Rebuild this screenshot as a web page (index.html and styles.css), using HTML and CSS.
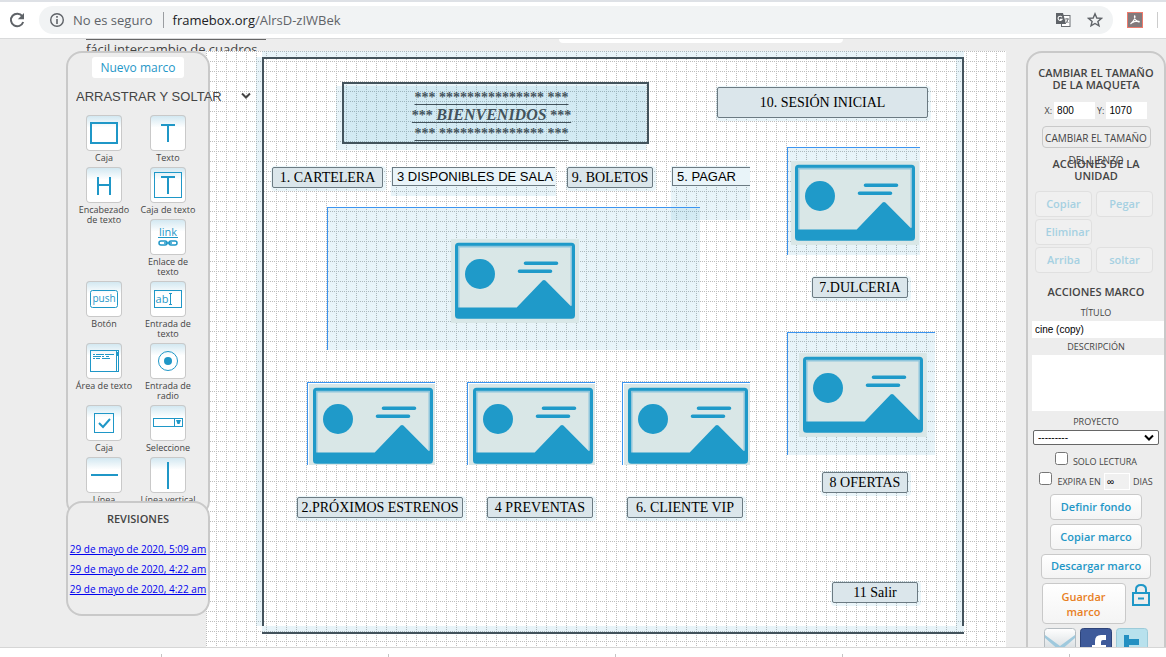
FILE: index.html
```html
<!DOCTYPE html>
<html lang="es">
<head>
<meta charset="utf-8">
<title>framebox.org</title>
<link rel="stylesheet" href="styles.css">
</head>
<body>
<svg class="defs" aria-hidden="true">
  <symbol id="picture" viewBox="0 0 128 84">
    <rect width="128" height="84" fill="#d9e7e7"/>
    <rect x="6.5" y="6.5" width="115" height="70" rx="1" fill="none" stroke="#8fc6dc" stroke-width="4"/>
    <rect x="5.5" y="5.2" width="117" height="73" rx="2" fill="none" stroke="#1f9ac9" stroke-width="3"/>
    <circle cx="29" cy="35" r="15" fill="#1f9ac9"/>
    <path d="M74.5 24.3H105.5M68.5 32.3H99.5" stroke="#1f9ac9" stroke-width="3.6" stroke-linecap="round"/>
    <path d="M5 68.5H65.7L91.6 41.6Q93 40.4 94.4 41.6L119.7 67L123 66V78H5Z" fill="#1f9ac9"/>
  </symbol>
</svg>

<header class="browser">
  <div class="tabstrip"></div>
  <div class="toolbar">
    <button class="reload" aria-label="Recargar">
      <svg width="18" height="18" viewBox="0 0 18 18"><path d="M14.3 5.2A6.3 6.3 0 1 0 15.2 11" fill="none" stroke="#5f6368" stroke-width="2"/><path d="M16 2V8.2H9.8Z" fill="#5f6368"/></svg>
    </button>
    <div class="address">
      <svg width="16" height="16" viewBox="0 0 16 16"><circle cx="8" cy="8" r="6.3" fill="none" stroke="#5f6368" stroke-width="1.4"/><path d="M8 7V12M8 4V5.8" stroke="#5f6368" stroke-width="1.6"/></svg>
      <span class="security">No es seguro</span>
      <span class="url"><b>framebox.org</b>/AlrsD-zIWBek</span>
      <svg class="translate" width="16" height="16" viewBox="0 0 16 16"><rect x="6.5" y="3.5" width="8.5" height="11" fill="#fff" stroke="#6a6e72"/><path d="M1 1H8L11 12H1Z" fill="#5f6368"/><path d="M7 5.2A2.1 2.1 0 1 0 7 7.4H5" fill="none" stroke="#fff" stroke-width="1.1"/><path d="M9.8 7H14M12 6V7M13 7Q12.5 10 10.5 11.5M11 8.5L13.5 11" fill="none" stroke="#6a6e72" stroke-width=".9"/></svg>
      <svg width="16" height="16" viewBox="0 0 16 16"><path d="M8 1.8L9.8 6L14.4 6.4L10.9 9.4L12 13.9L8 11.5L4 13.9L5.1 9.4L1.6 6.4L6.2 6Z" fill="none" stroke="#5f6368" stroke-width="1.4"/></svg>
    </div>
    <svg class="pdf" width="16" height="16" viewBox="0 0 16 16"><rect x=".5" y=".5" width="15" height="15" fill="#837a7c" stroke="#ee7a6c"/><path d="M7.6 3.5C9 5 7 9 3.5 12M7.6 3.5C6.600 5.500 9 10 12.500 10.200M4 11.200C7 9.400 10 8.700 12.700 9.500" fill="none" stroke="#fff" stroke-width="1.1"/></svg>
    <span class="toolbar-rule"></span>
  </div>
</header>

<main class="page">
  <aside class="left">
    <p class="intro">fácil intercambio de cuadros</p>
    <section class="panel tools-panel">
      <button class="new-frame">Nuevo marco</button>
      <div class="mode">
        <select aria-label="Modo"><option>ARRASTRAR Y SOLTAR</option></select>
        <svg width="10" height="8" viewBox="0 0 10 8"><path d="M1 1.500L5 5.500L9 1.500" fill="none" stroke="#444" stroke-width="2"/></svg>
      </div>
      <div class="tools">
        <button class="tool"><svg viewBox="0 0 36 36"><rect x="5" y="8" width="26" height="20"/></svg><span>Caja</span></button>
        <button class="tool"><svg viewBox="0 0 36 36"><path d="M11 10H25M18 10V27"/></svg><span>Texto</span></button>
        <button class="tool tool-tall"><svg viewBox="0 0 36 36"><path d="M12 10V28M24 10V28M12 18H24"/></svg><span>Encabezado de texto</span></button>
        <button class="tool"><svg viewBox="0 0 36 36"><rect class="thin" x="4.500" y="5.500" width="27" height="25"/><path d="M11 10H25M18 10V27"/></svg><span>Caja de texto</span></button>
        <button class="tool tool-right"><svg viewBox="0 0 36 36"><text x="18" y="17" font-size="11">link</text><path class="thin" d="M8 18.500H28"/><rect class="mid" x="9" y="22" width="8" height="4" rx="2"/><rect class="mid" x="19" y="22" width="8" height="4" rx="2"/><path class="mid" d="M14 24H22"/></svg><span>Enlace de texto</span></button>
        <button class="tool"><svg viewBox="0 0 36 36"><rect class="thin" x="4.500" y="9.500" width="27" height="17" rx="2"/><text x="18" y="21" font-size="10">push</text></svg><span>Botón</span></button>
        <button class="tool"><svg viewBox="0 0 36 36"><rect class="thin" x="4.500" y="9.500" width="27" height="17"/><text x="12" y="22" font-size="11">ab</text><path class="thin" d="M19 12.500H22M19 23.500H22M20.500 12.500V23.500"/></svg><span>Entrada de texto</span></button>
        <button class="tool"><svg viewBox="0 0 36 36"><rect class="thin" x="4.500" y="7.500" width="28" height="21"/><path class="thin" d="M30.500 7V29M7 11.500H9M10 11.500H18M19 11.500H28M7 13.500H15M16 13.500H18M20 13.500H23M7 15.500H9M10 15.500H14M16 15.500H24"/><path d="M31 9V13"/></svg><span>Área de texto</span></button>
        <button class="tool"><svg viewBox="0 0 36 36"><circle class="thin" cx="18" cy="18" r="9.500"/><circle class="solid" cx="18" cy="18" r="4"/></svg><span>Entrada de radio</span></button>
        <button class="tool"><svg viewBox="0 0 36 36"><rect class="thin" x="8.500" y="8.500" width="19" height="19"/><path d="M13 18L17 22L24 14"/></svg><span>Caja</span></button>
        <button class="tool"><svg viewBox="0 0 36 36"><rect class="thin" x="3.500" y="13.500" width="29" height="8"/><path class="thin" d="M24.500 13V22"/><path class="solid" d="M26 15H31L29.500 19H27.500Z"/></svg><span>Seleccione</span></button>
        <button class="tool"><svg viewBox="0 0 36 36"><path d="M5 18H32"/></svg><span>Línea</span></button>
        <button class="tool"><svg viewBox="0 0 36 36"><path d="M18 5V32"/></svg><span>Línea vertical</span></button>
      </div>
    </section>
    <section class="panel revisions">
      <h2>REVISIONES</h2>
      <a href="#r3">29 de mayo de 2020, 5:09 am</a>
      <a href="#r2">29 de mayo de 2020, 4:22 am</a>
      <a href="#r1">29 de mayo de 2020, 4:22 am</a>
    </section>
  </aside>

  <div class="middle">
    <div class="banner"></div>
    <div class="canvas">
      <div class="edge edge-top"></div>
      <div class="edge edge-bottom"></div>
      <div class="edge edge-left"></div>
      <div class="edge edge-right"></div>

      <div class="tint welcome-tint"></div>
      <div class="welcome">
        <span>*** *************** ***</span>
        <span>*** <em>BIENVENIDOS</em> ***</span>
        <span>*** *************** ***</span>
      </div>

      <button class="node login">10. SESIÓN INICIAL</button>
      <button class="node billboard">1. CARTELERA</button>
      <div class="tint rooms-tint"></div>
      <input class="field rooms" aria-label="Salas" value="3 DISPONIBLES DE SALA">
      <button class="node tickets">9. BOLETOS</button>
      <div class="tint pay-tint"></div>
      <input class="field pay" aria-label="Pagar" value="5. PAGAR">

      <div class="picture pic-main"><svg><use href="#picture"/></svg></div>
      <div class="picture pic-candy"><svg><use href="#picture"/></svg></div>
      <div class="picture pic-offers"><svg><use href="#picture"/></svg></div>
      <div class="picture small pic-soon"><svg><use href="#picture"/></svg></div>
      <div class="picture small pic-presale"><svg><use href="#picture"/></svg></div>
      <div class="picture small pic-vip"><svg><use href="#picture"/></svg></div>

      <button class="node candy">7.DULCERIA</button>
      <button class="node offers">8 OFERTAS</button>
      <button class="node soon">2.PRÓXIMOS ESTRENOS</button>
      <button class="node presale">4 PREVENTAS</button>
      <button class="node vip">6. CLIENTE VIP</button>
      <button class="node exit">11 Salir</button>
    </div>
  </div>

  <aside class="right">
    <section class="panel actions">
      <h2>CAMBIAR EL TAMAÑO DE LA MAQUETA</h2>
      <div class="size">
        <label for="w">X:</label><input id="w" value="800">
        <label for="h">Y:</label><input id="h" value="1070">
      </div>
      <button class="resize">CAMBIAR EL TAMAÑO DEL LIENZO</button>
      <h2>ACCIONES DE LA UNIDAD</h2>
      <div class="unit">
        <button disabled>Copiar</button><button disabled>Pegar</button>
        <button class="alone" disabled>Eliminar</button>
        <button disabled>Arriba</button><button disabled>soltar</button>
      </div>
      <h2 class="frame-title">ACCIONES MARCO</h2>
      <label class="caption" for="title">TÍTULO</label>
      <input class="wide" id="title" value="cine (copy)">
      <label class="caption" for="desc">DESCRIPCIÓN</label>
      <textarea class="wide" id="desc"></textarea>
      <label class="caption" for="project">PROYECTO</label>
      <div class="project">
        <select id="project"><option>---------</option></select>
        <svg width="10" height="8" viewBox="0 0 10 8"><path d="M1 1.500L5 5.500L9 1.500" fill="none" stroke="#000" stroke-width="2"/></svg>
      </div>
      <label class="check"><input type="checkbox"><span>SOLO LECTURA</span></label>
      <div class="check"><input type="checkbox" id="expires"><label for="expires">EXPIRA EN</label><input class="days" id="days" value="∞"><label for="days">DIAS</label></div>
      <button class="action">Definir fondo</button>
      <button class="action">Copiar marco</button>
      <button class="action action-wide">Descargar marco</button>
      <div class="save-row">
        <button class="save">Guardar marco</button>
        <svg width="20" height="24" viewBox="0 0 20 24"><path d="M2 10H18V22H2ZM5 10V6.500Q5 2 10 2T15 6.500V10M7 15.500H13" fill="none" stroke="#1f97c7" stroke-width="2"/></svg>
      </div>
      <div class="share">
        <svg width="32" height="32" viewBox="0 0 32 32"><defs><linearGradient id="mail" x2="0" y2="1"><stop stop-color="#fff"/><stop offset="1" stop-color="#c5cdd2"/></linearGradient></defs><rect x=".5" y=".5" width="31" height="31" rx="3" fill="url(#mail)" stroke="#b5bcc1"/><path d="M1 7L16 18L31 7V10L16 23L1 10Z" fill="#9fc9dd"/></svg>
        <svg width="32" height="32" viewBox="0 0 32 32"><rect x=".5" y=".5" width="31" height="31" rx="3" fill="#3e5a9a" stroke="#2d4379"/><path d="M26 7V12H23Q21 12 21 14V17H26V21H21V32H15V21H12V17H15V13Q15 7 21 7Z" fill="#fff"/></svg>
        <svg width="32" height="32" viewBox="0 0 32 32"><rect x=".5" y=".5" width="31" height="31" rx="3" fill="#b8e1ed" stroke="#9ccbd9"/><path d="M8 7H13V11H23V17H13V22Q13 25 17 25H23V30H15Q8 30 8 23Z" fill="#2390c2"/></svg>
      </div>
    </section>
  </aside>
</main>

<footer class="shelf"><i></i><i></i><i></i><i></i><i></i></footer>
</body>
</html>
```
FILE: styles.css
```css
* { box-sizing: border-box; }
html, body { height: 100%; margin: 0; }
body {
  display: flex;
  flex-direction: column;
  overflow: hidden;
  background: #ededed;
  color: #444;
  font-family: "Open Sans", sans-serif;
  font-size: 12px;
}
button, input, select, textarea { margin: 0; font: inherit; color: inherit; border-radius: 0; }
button { padding: 0; border: 0; background: none; }
svg { display: block; flex: none; }
.defs { position: absolute; width: 0; height: 0; }

/* browser bar */
.browser { flex: none; background: #fff; border-bottom: 1px solid #d9dadb; }
.tabstrip { height: 2px; background: #dee1e6; }
.toolbar { display: flex; align-items: center; height: 36px; padding: 0 8px; }
.reload { width: 18px; margin-right: 13px; }
.address {
  display: flex;
  flex: 1;
  align-items: center;
  height: 28px;
  padding: 0 10px;
  border-radius: 14px;
  background: #f1f3f4;
  color: #5f6368;
  font-size: 13px;
}
.security { margin: 0 10px 0 8px; }
.url { padding-left: 9px; border-left: 1px solid #9a9da1; line-height: 16px; }
.url b { color: #202124; font-weight: 400; }
.translate { margin: 0 16px 0 auto; }
.pdf { margin-left: 14px; }
.toolbar-rule { width: 1px; height: 16px; margin-left: 14px; background: #ccc; }

/* page */
.page { display: flex; flex: 1; min-height: 0; overflow: hidden; }
.panel { border: 2px solid #c9c9c9; border-radius: 16px; background: #ededed; }
.panel h2 { max-width: 124px; margin: 0; font-size: 11px; font-weight: 600; line-height: 12px; text-align: center; }

.left {
  z-index: 1;
  display: flex;
  flex: none;
  flex-direction: column;
  width: 210px;
  margin-right: -4px;
  padding: 0 0 31px 66px;
}
.intro {
  flex: none;
  width: 180px;
  height: 12px;
  margin: 0 0 0 20px;
  overflow: hidden;
  border-top: 1px solid #666;
  font-size: 13px;
  line-height: 18px;
  white-space: nowrap;
}
.tools-panel { flex: 1; min-height: 0; padding: 4px 4px 0; clip-path: inset(0 -60px 0 0); }
.new-frame {
  display: block;
  width: 92px;
  height: 21px;
  margin: 0 auto;
  border-radius: 3px;
  background: #fff;
  color: #1f97c7;
  font-size: 12px;
}
.mode { display: flex; align-items: center; width: 180px; margin: 8px 0 9px; }
.mode select {
  flex: none;
  width: 180px;
  height: 20px;
  padding: 0 4px;
  border: 0;
  appearance: none;
  background: none;
  font-family: "Liberation Sans", sans-serif;
  font-size: 13px;
}
.mode svg { margin-left: -11px; }
.tools { display: grid; grid-template-columns: 64px 64px; row-gap: 4px; align-items: start; }
.tool { display: flex; flex-direction: column; align-items: center; font-size: 9px; line-height: 10px; }
.tool-tall { margin-bottom: -10px; }
.tool-right { grid-column: 2; }
.tool span { max-width: 60px; }
.tool svg {
  width: 36px;
  height: 36px;
  margin-bottom: 2px;
  border-radius: 4px;
  box-shadow: inset 0 0 0 1px #c9c9c9;
  background: linear-gradient(#cfe6f0, #fff 35%);
  fill: none;
  stroke: #1f97c7;
  stroke-width: 2;
}
.tool .thin { stroke-width: 1; }
.tool .mid { stroke-width: 1.5; }
.tool .solid, .tool text { fill: #1f97c7; stroke: none; }
.tool text { text-anchor: middle; }

.revisions {
  position: relative;
  display: flex;
  flex: none;
  flex-direction: column;
  align-items: center;
  height: 115px;
  margin-top: -16px;
  padding-top: 10px;
}
.panel.revisions h2 { margin-bottom: 14px; }
.revisions a { color: #00e; font-size: 10px; line-height: 20px; white-space: nowrap; }

/* canvas */
.middle { display: flex; flex: 1; flex-direction: column; min-width: 0; }
.banner { flex: none; width: 284px; height: 4px; margin: 0 auto 8px 353px; border-radius: 0 0 4px 4px; background: #fff; }
.canvas {
  position: relative;
  flex: 1;
  overflow: hidden;
  background:
    conic-gradient(at 1px 1px, transparent 75%, #bdbdbd 0) 0 0 / 2px 10px,
    conic-gradient(at 1px 1px, transparent 75%, #bdbdbd 0) 0 0 / 10px 2px,
    #fff;
}
.canvas > * { position: absolute; }
.tint { background: rgba(30, 150, 200, .1); }
.edge { border: 0 solid #43535c; background: rgba(30, 150, 200, .1); }
.edge-top { left: 56px; top: 0; width: 702px; height: 8px; border-bottom-width: 2px; }
.edge-bottom { left: 56px; top: 575px; width: 702px; height: 8px; border-bottom-width: 2px; }
.edge-left { left: 50px; top: 6px; width: 8px; height: 569px; border-right-width: 2px; }
.edge-right { left: 750px; top: 6px; width: 8px; height: 569px; border-right-width: 2px; }

.welcome-tint { left: 130px; top: 35px; width: 310px; height: 64px; }
.welcome {
  display: flex;
  flex-direction: column;
  align-items: center;
  left: 136px;
  top: 31px;
  width: 307px;
  height: 62px;
  padding: 5px 8px 0 0;
  border: 2px solid #43535c;
  background: rgba(30, 150, 200, .1);
  color: #43535c;
  font: bold 14px/18px "Liberation Serif", serif;
}
.welcome span { text-decoration: underline; text-decoration-thickness: 1px; text-underline-offset: 2px; }
.welcome em { font-size: 16px; line-height: 16px; }

.node {
  height: 21px;
  border: 1px solid #6b7a82;
  border-radius: 2px;
  box-shadow: 1px 1px 0 2px rgba(30, 150, 200, .09);
  background: #dbe6eb;
  color: #000;
  font-family: "Liberation Serif", serif;
  font-size: 14px;
  white-space: nowrap;
}
.login { left: 511px; top: 36px; width: 211px; height: 31px; }
.billboard { left: 66px; top: 116px; width: 111px; }
.tickets { left: 361px; top: 116px; width: 86px; }
.candy { left: 606px; top: 226px; width: 96px; }
.offers { left: 616px; top: 421px; width: 86px; }
.soon { left: 91px; top: 446px; width: 166px; }
.presale { left: 281px; top: 446px; width: 106px; }
.vip { left: 421px; top: 446px; width: 116px; }
.exit { left: 626px; top: 531px; width: 86px; }

.field {
  top: 116px;
  height: 19px;
  padding: 0 0 0 4px;
  border: 1px solid #6b7a82;
  border-right: 0;
  background: #e9f4f9;
  color: #000;
  font-family: "Liberation Sans", sans-serif;
  font-size: 13px;
}
.rooms { left: 186px; width: 163px; }
.rooms-tint { left: 185px; top: 116px; width: 165px; height: 29px; }
.pay { left: 466px; width: 78px; }
.pay-tint { left: 465px; top: 115px; width: 79px; height: 54px; }

.picture {
  display: flex;
  align-items: center;
  justify-content: center;
  overflow: hidden;
  border: 0 solid #3a94f0;
  border-width: 1px 0 0 1px;
  background: rgba(30, 150, 200, .1);
}
.picture svg { width: 128px; height: 84px; }
.small { align-items: flex-start; justify-content: flex-start; width: 128px; height: 83px; padding: 1px 0 0 1px; background: #fff; }
.pic-main { left: 121px; top: 156px; width: 373px; height: 143px; padding: 4px 0 0 2px; }
.pic-candy { left: 581px; top: 96px; width: 133px; height: 108px; padding: 3px 0 0 2px; }
.pic-offers { left: 581px; top: 281px; width: 148px; height: 123px; padding: 2px 0 0 2px; }
.pic-soon { left: 101px; top: 331px; }
.pic-presale { left: 261px; top: 331px; }
.pic-vip { left: 416px; top: 331px; }

/* actions */
.right { flex: none; width: 160px; padding: 12px 0 0 20px; }
.actions {
  display: flex;
  flex-direction: column;
  align-items: center;
  min-height: 640px;
  padding: 14px 0 0 0;
  font-size: 9px;
}
.actions input, .actions textarea { border: 1px solid #fff; background: #fff; color: #000; font-family: "Liberation Sans", sans-serif; font-size: 10px; }
.size { display: flex; gap: 2px; align-items: center; margin: 11px 0 7px; }
.size input { width: 41px; height: 17px; padding: 0 2px; }
.resize {
  width: 109px;
  height: 22px;
  margin-bottom: 10px;
  border: 1px solid #c9c9c9;
  border-radius: 4px;
  font-size: 10px;
  line-height: 22px;
  display: flex;
  justify-content: center;
}
.unit { display: grid; grid-template-columns: 57px 57px; gap: 2px 4px; margin: 9px 4px 0 0; }
.unit button {
  height: 26px;
  padding: 0 0 2px;
  border: 1px solid #e0e0e0;
  border-radius: 4px;
  background: #f0f0f0;
  color: #a6d0e2;
  font-size: 11px;
  font-weight: 600;
}
.unit .alone { grid-column: 1 / 3; width: 57px; padding-left: 8px; }
.actions .frame-title { margin: 13px 0 10px; }
.caption { line-height: 10px; margin: 4px 0 3px; }
.frame-title + .caption { margin-top: 0; }
.wide { width: 100%; height: 17px; padding: 0 2px; }
.actions .wide { width: 132px; margin-left: 4px; }
textarea.wide { height: 56px; resize: none; }
textarea + .caption { margin-top: 6px; }
.project { display: flex; align-items: center; width: 126px; }
.project select {
  width: 126px;
  height: 15px;
  flex: none;
  padding: 0 4px;
  border: 1px solid #666;
  border-radius: 2px;
  appearance: none;
  background: #fff;
  color: #000;
  font-family: "Liberation Sans", sans-serif;
  font-size: 10px;
}
.project svg { margin-left: -15px; }
.check { display: flex; gap: 5px; align-items: center; height: 20px; margin-top: 6px; }
.check + .check { margin-top: 0; }
.check input[type="checkbox"] { width: 13px; height: 13px; margin-bottom: 6px; }
.check + .check .days { width: 26px; height: 17px; margin: 0 -2px; padding: 0 2px; background: #f0f0f0; }
.action, .save {
  width: 92px;
  height: 26px;
  margin-bottom: 4px;
  padding-bottom: 2px;
  border: 1px solid #c9c9c9;
  border-radius: 4px;
  background: linear-gradient(#fff, #f4f4f4);
  color: #1f97c7;
  font-size: 11px;
  font-weight: 600;
  line-height: 15px;
}
.check + .action { margin-top: 3px; }
.action-wide { width: 110px; height: 25px; }
.save-row { display: flex; gap: 5px; }
.save { width: 84px; height: 41px; padding: 0 16px; color: #e8801f; }
.share { display: flex; gap: 4px; }

/* download shelf */
.shelf { display: flex; flex: none; gap: 226px; align-items: flex-end; height: 10px; padding-left: 161px; border-top: 1px solid #d6d6d6; background: #fff; }
.shelf i { flex: none; width: 1px; height: 3px; background: #c4c4c4; }
```
